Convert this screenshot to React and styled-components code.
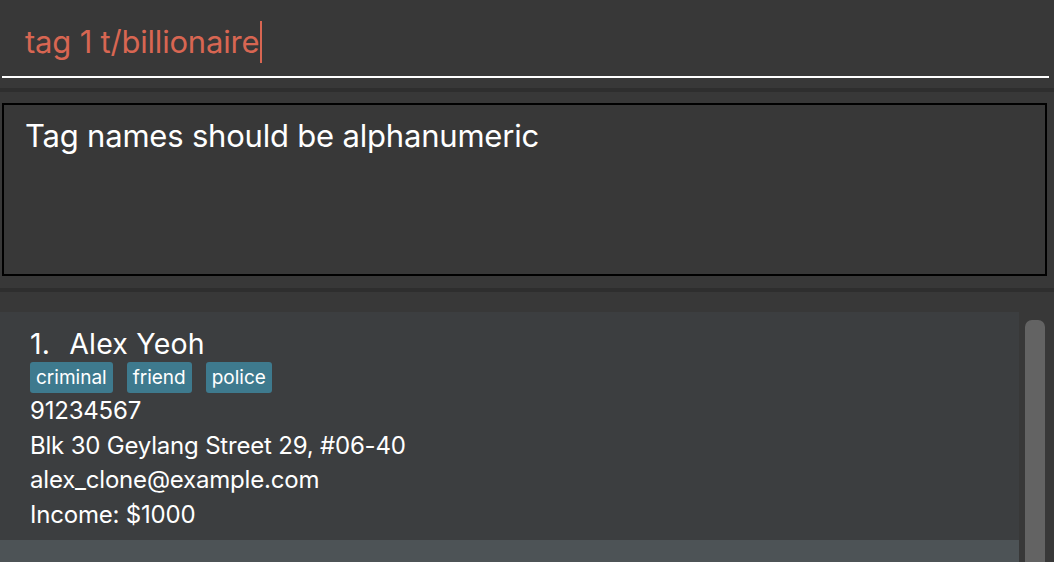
import React from "react";
import styled, { createGlobalStyle } from "styled-components";

const GlobalStyle = createGlobalStyle`
  html, body {
    margin: 0;
    padding: 0;
    background: #383838;
    overflow: hidden;
  }
  body {
    font-family: Inter, "Liberation Sans", sans-serif;
  }
`;

const person = {
  index: 1,
  name: "Alex Yeoh",
  tags: ["criminal", "friend", "police"],
  phone: "91234567",
  address: "Blk 30 Geylang Street 29, #06-40",
  email: "alex_clone@example.com",
  income: "Income: $1000",
};

const App = () => {
  return (
    <Window>
      <GlobalStyle />
      <CommandBox>
        <CommandInput>
          <CommandText>tag 1 t/billionaire</CommandText>
          <Caret />
        </CommandInput>
      </CommandBox>
      <Splitter />
      <ResultPane>
        <ResultBox>Tag names should be alphanumeric</ResultBox>
      </ResultPane>
      <Splitter />
      <ListPane>
        <List>
          <Card>
            <Name>
              <Index>{person.index}.</Index>
              {person.name}
            </Name>
            <Tags>
              {person.tags.map((t) => (
                <Tag key={t}>{t}</Tag>
              ))}
            </Tags>
            <Field>{person.phone}</Field>
            <Field>{person.address}</Field>
            <Field>{person.email}</Field>
            <Field>{person.income}</Field>
          </Card>
          <Card $alt />
        </List>
        <ScrollTrack>
          <ScrollThumb />
        </ScrollTrack>
      </ListPane>
    </Window>
  );
};

const Window = styled.div`
  width: 1054px;
  height: 562px;
  display: flex;
  flex-direction: column;
  background: #383838;
  overflow: hidden;
`;

const CommandBox = styled.div`
  height: 88px;
  padding: 0 5px 0 2px;
  display: flex;
  flex-direction: column;
  box-sizing: border-box;
`;

const CommandInput = styled.div`
  height: 78px;
  box-sizing: border-box;
  border-bottom: 2px solid #ffffff;
  display: flex;
  align-items: center;
  padding: 7px 0 0 23px;
`;

const CommandText = styled.span`
  color: #d86652;
  font-size: 31px;
  letter-spacing: -0.2px;
  white-space: nowrap;
`;

const Caret = styled.span`
  width: 2px;
  height: 42px;
  margin-left: 1px;
  background: #d86652;
`;

const Splitter = styled.div`
  height: 4px;
  background: #2e2e2e;
  flex-shrink: 0;
`;

const ResultPane = styled.div`
  padding: 11px 7px 12px 2px;
`;

const ResultBox = styled.div`
  height: 173px;
  box-sizing: border-box;
  border: 2px solid #000000;
  padding: 12px 21px;
  color: #ffffff;
  font-size: 31px;
  letter-spacing: -0.2px;
`;

const ListPane = styled.div`
  flex: 1;
  display: flex;
  padding-top: 20px;
  min-height: 0;
`;

const List = styled.div`
  width: 1019px;
  display: flex;
  flex-direction: column;
`;

const Card = styled.div`
  background: ${(p) => (p.$alt ? "#4d5356" : "#3c3e40")};
  height: ${(p) => (p.$alt ? "auto" : "228px")};
  flex: ${(p) => (p.$alt ? 1 : "none")};
  box-sizing: border-box;
  padding: 15px 30px 0;
  display: flex;
  flex-direction: column;
  color: #ffffff;
`;

const Name = styled.div`
  font-size: 28.5px;
  line-height: 34px;
  color: #ffffff;
  letter-spacing: 0.2px;
`;

const Index = styled.span`
  margin-right: 19px;
`;

const Tags = styled.div`
  display: flex;
  gap: 14px;
  margin: 1px 0 1px;
`;

const Tag = styled.span`
  background: #3e7a8e;
  color: #ffffff;
  font-size: 19px;
  height: 31px;
  line-height: 31px;
  padding: 0 6px;
  border-radius: 3px;
`;

const Field = styled.div`
  font-size: 24px;
  line-height: 34.5px;
  color: #ffffff;
  letter-spacing: -0.2px;
`;

const ScrollTrack = styled.div`
  flex: 1;
  padding: 8px 9px 0 6px;
  display: flex;
`;

const ScrollThumb = styled.div`
  width: 20px;
  flex: 1;
  background: #636363;
  border-radius: 7px 7px 0 0;
`;

export default App;
